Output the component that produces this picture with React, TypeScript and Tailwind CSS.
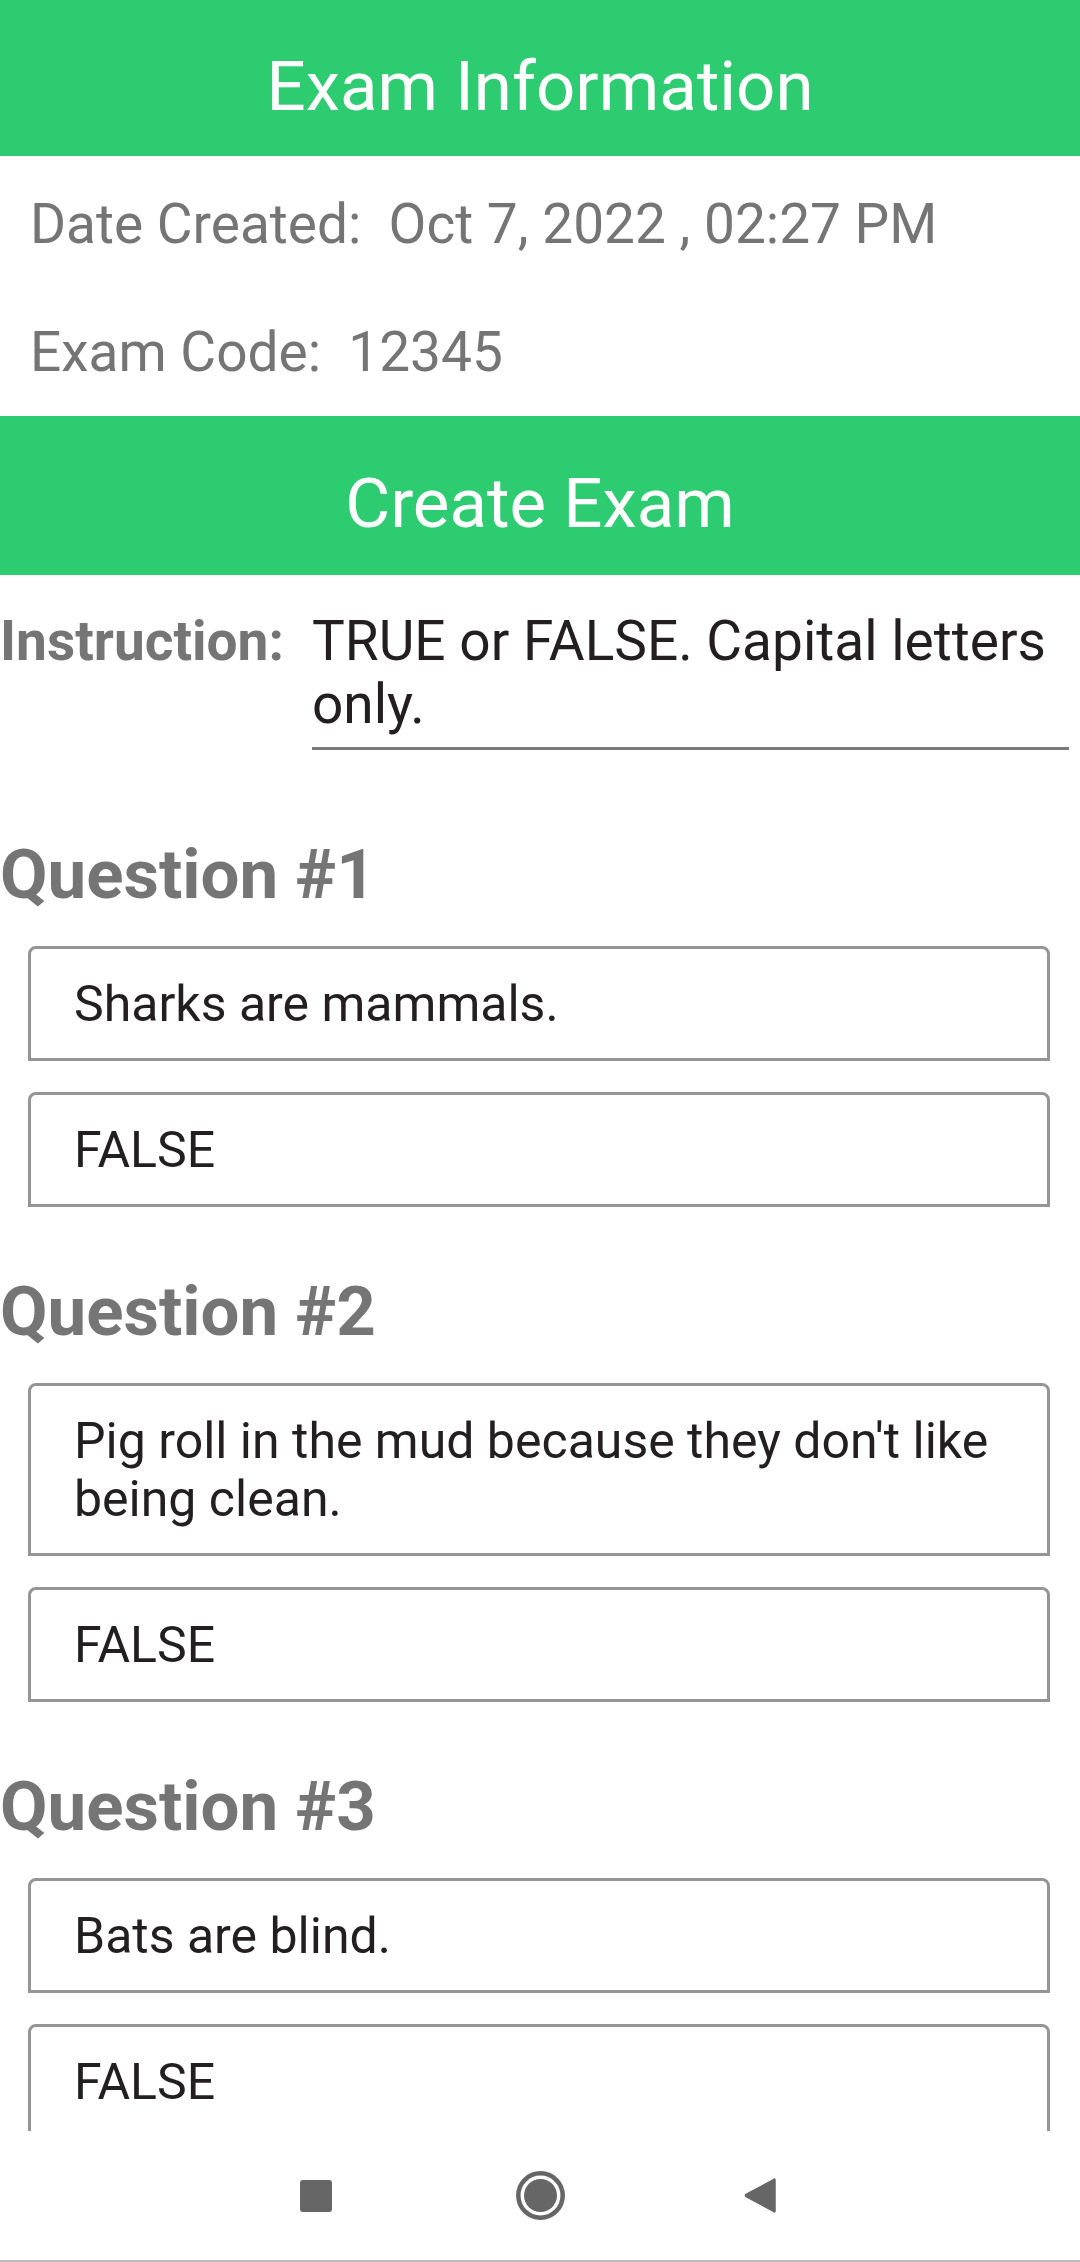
import React from "react";

const questions = [
  { question: "Sharks are mammals.", answer: "FALSE" },
  {
    question: "Pig roll in the mud because they don't like being clean.",
    answer: "FALSE",
  },
  { question: "Bats are blind.", answer: "FALSE" },
];

function AnswerBox({ text, className = "" }: { text: string; className?: string }) {
  return (
    <div
      className={`ml-[28px] mr-[30px] rounded-t-[8px] border-[3px] border-[#959595] pl-[43px] pr-[30px] pt-[26px] pb-[25px] text-[50px] leading-[58px] text-[#231f20] ${className}`}
    >
      {text}
    </div>
  );
}

export default function App() {
  return (
    <div className="flex h-[2262px] w-[1080px] flex-col overflow-hidden bg-white font-['Roboto',sans-serif]">
      <div className="h-[2131px] overflow-hidden">
        {/* Exam info */}
        <div className="h-[156px] bg-[#2ecc71] pt-[46px] text-center text-[69px] leading-[normal] text-white">
          Exam Information
        </div>
        <div className="h-[260px] px-[30px] pt-[36px] text-[55px] leading-[normal] text-[#757575]">
          <p className="whitespace-pre">Date Created:  Oct 7, 2022 , 02:27 PM</p>
          <p className="mt-[64px] whitespace-pre">Exam Code:  12345</p>
        </div>

        {/* Create exam */}
        <div className="h-[159px] bg-[#2ecc71] pt-[47px] text-center text-[69px] leading-[normal] text-white">
          Create Exam
        </div>

        <div className="mt-[35px] flex items-start">
          <span className="w-[282px] shrink-0 text-[55px] font-bold leading-[63px] text-[#757575]">
            Instruction:
          </span>
          <div className="ml-[30px] mr-[11px] flex-1 border-b-[3px] border-[#7a7a7a] pb-[11px] text-[55px] leading-[63px] text-[#231f20]">
            TRUE or FALSE. Capital letters only.
          </div>
        </div>

        {questions.map((q, i) => (
          <div key={i}>
            <h2
              className={`${i === 0 ? "mt-[84px]" : "mt-[64px]"} text-[69px] font-bold leading-[normal] text-[#757575]`}
            >
              Question #{i + 1}
            </h2>
            <AnswerBox text={q.question} className="mt-[31px]" />
            <AnswerBox text={q.answer} className="mt-[31px]" />
          </div>
        ))}
      </div>

      {/* Android nav bar */}
      <div className="flex h-[131px] items-center justify-center border-b-2 border-[#bdbdbd]">
        <div className="flex w-[224px] justify-center">
          <div className="h-[32px] w-[32px] rounded-[3px] bg-[#666666]" />
        </div>
        <div className="flex w-[224px] justify-center">
          <svg width="49" height="49" viewBox="0 0 49 49">
            <circle cx="24.5" cy="24.5" r="22.2" fill="none" stroke="#666666" strokeWidth="4.5" />
            <circle cx="24.5" cy="24.5" r="16.5" fill="#666666" />
          </svg>
        </div>
        <div className="flex w-[224px] justify-center">
          <svg width="32" height="37" viewBox="0 0 32 37" className="-ml-[8px]">
            <path
              d="M30 2.5 Q31 1.5 31 3 L31 34 Q31 35.5 30 34.5 L2 19.5 Q0.8 18.5 2 17.5 Z"
              fill="#666666"
              stroke="#666666"
              strokeWidth="1.5"
              strokeLinejoin="round"
            />
          </svg>
        </div>
      </div>
    </div>
  );
}
